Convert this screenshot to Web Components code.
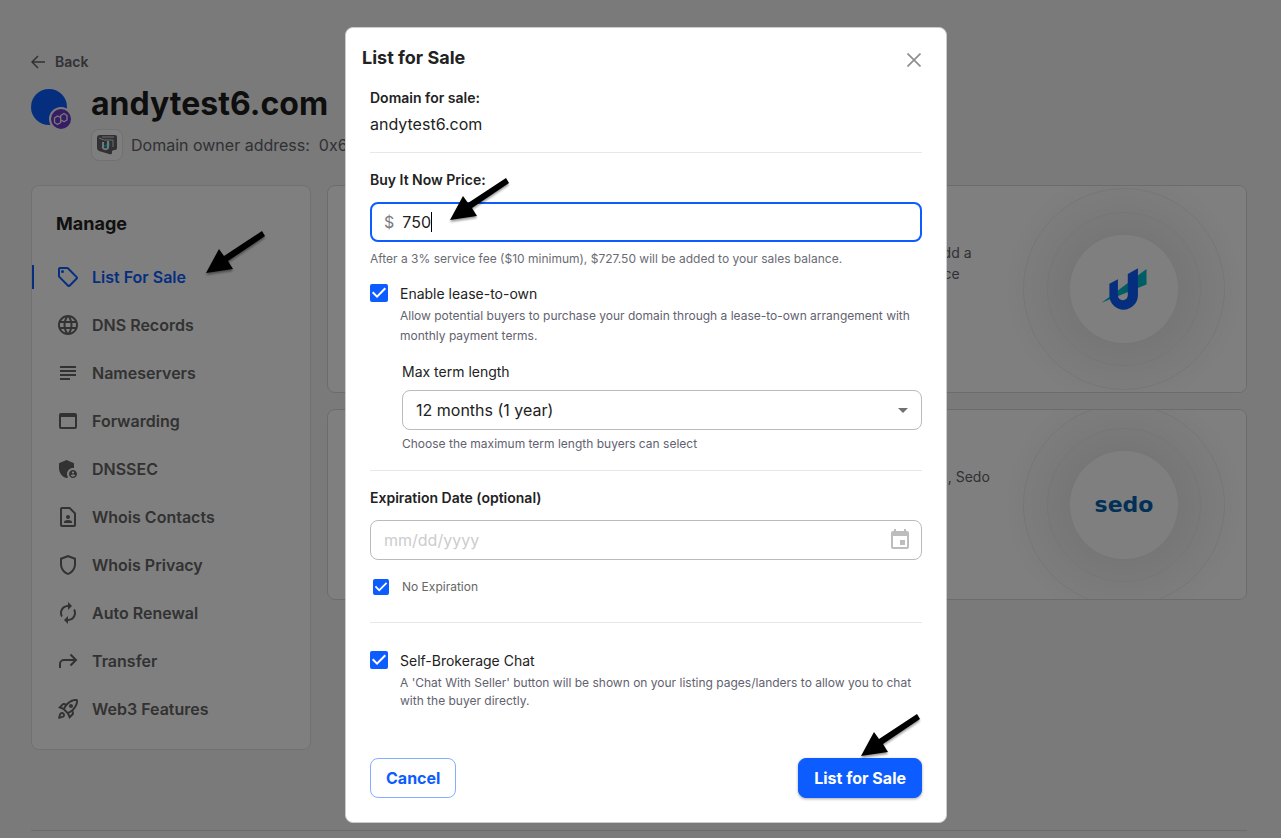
<!DOCTYPE html>
<html lang="en">
<head>
<meta charset="utf-8">
<title>List for Sale - andytest6.com</title>
<style>
    html{
        background:#f4f4f4;
    }
    body{
        margin:0;
        min-height:100vh;
        font-family:Inter, "Liberation Sans", sans-serif;
        font-size:14px;
        line-height:20px;
        color:#222;
    }
</style>
</head>
<body>
<domain-page>
    <domain-header slot="header" name="andytest6.com">0x6</domain-header>
    <side-nav slot="nav">
        <nav-item icon="tag" active>List For Sale</nav-item>
        <nav-item icon="globe">DNS Records</nav-item>
        <nav-item icon="lines">Nameservers</nav-item>
        <nav-item icon="window">Forwarding</nav-item>
        <nav-item icon="admin">DNSSEC</nav-item>
        <nav-item icon="contact">Whois Contacts</nav-item>
        <nav-item icon="shield">Whois Privacy</nav-item>
        <nav-item icon="renew">Auto Renewal</nav-item>
        <nav-item icon="transfer">Transfer</nav-item>
        <nav-item icon="rocket">Web3 Features</nav-item>
    </side-nav>
    <market-card class="tall">
        domain, add a<br>marketplace
        <svg slot="logo" width="46" height="42" viewBox="514 293 139 128">
            <path fill="#0bc" d="M515 399L652 296V343Z"/>
            <path fill="#0d5cff" d="M539 341V376C539 401 559 420 582 420S626 401 626 376V294L595 311V377C595 385 589 391 580 391S565 385 565 377V327Z"/>
        </svg>
    </market-card>
    <market-card>
        or Afternic, Sedo
        <sedo-logo slot="logo">sedo</sedo-logo>
    </market-card>
</domain-page>
<sale-dialog>
    <span slot="title">List for Sale</span>
    <span slot="domain">andytest6.com</span>
    <check-option slot="lease" class="loose">
        Enable lease-to-own
        <span slot="hint">Allow potential buyers to purchase your domain through a lease-to-own arrangement with monthly payment terms.</span>
    </check-option>
    <check-option slot="expire" small>No Expiration</check-option>
    <check-option slot="chat">
        Self-Brokerage Chat
        <span slot="hint">A 'Chat With Seller' button will be shown on your listing pages/landers to allow you to chat with the buyer directly.</span>
    </check-option>
</sale-dialog>

<script>
const icons = {
    tag:'<path d="M21.41 11.41l-8.83-8.83c-.37-.37-.88-.58-1.41-.58H4c-1.1 0-2 .9-2 2v7.17c0 .53.21 1.04.59 1.41l8.83 8.83c.78.78 2.05.78 2.83 0l7.17-7.17c.78-.78.78-2.04-.01-2.83zM12.83 20L4 11.17V4h7.17L20 12.83 12.83 20z"/><circle cx="6.5" cy="6.5" r="1.5"/>',
    globe:'<path d="M11.99 2C6.47 2 2 6.48 2 12s4.47 10 9.99 10C17.52 22 22 17.52 22 12S17.52 2 11.99 2zm6.93 6h-2.95c-.32-1.25-.78-2.45-1.38-3.56 1.84.63 3.37 1.91 4.33 3.56zM12 4.04c.83 1.2 1.48 2.53 1.91 3.96h-3.82c.43-1.43 1.08-2.76 1.91-3.96zM4.26 14C4.1 13.36 4 12.69 4 12s.1-1.36.26-2h3.38c-.08.66-.14 1.32-.14 2s.06 1.34.14 2H4.26zm.82 2h2.95c.32 1.25.78 2.45 1.38 3.56-1.84-.63-3.37-1.9-4.33-3.56zm2.95-8H5.08c.96-1.66 2.49-2.93 4.33-3.56C8.81 5.55 8.35 6.75 8.03 8zM12 19.96c-.83-1.2-1.48-2.53-1.91-3.96h3.82c-.43 1.43-1.08 2.76-1.91 3.96zM14.34 14H9.66c-.09-.66-.16-1.32-.16-2s.07-1.35.16-2h4.68c.09.65.16 1.32.16 2s-.07 1.34-.16 2zm.25 5.56c.6-1.11 1.06-2.31 1.38-3.56h2.95c-.96 1.65-2.49 2.93-4.33 3.56zM16.36 14c.08-.66.14-1.32.14-2s-.06-1.34-.14-2h3.38c.16.64.26 1.31.26 2s-.1 1.36-.26 2h-3.38z"/>',
    lines:'<path d="M4 5h16v2H4zM4 9h16v2H4zM4 13h16v2H4zM4 17h10v2H4z"/>',
    window:'<path d="M19 4H5c-1.11 0-2 .9-2 2v12c0 1.1.89 2 2 2h14c1.1 0 2-.9 2-2V6c0-1.1-.89-2-2-2zm0 14H5V8h14v10z"/>',
    admin:'<path d="M17 11c.34 0 .67.04 1 .09V6.27L10.5 3 3 6.27v4.91c0 4.54 3.2 8.79 7.5 9.82.55-.13 1.08-.32 1.6-.55-.69-.98-1.1-2.17-1.1-3.45 0-3.31 2.69-6 6-6z"/><path d="M17 13c-2.21 0-4 1.79-4 4s1.79 4 4 4 4-1.79 4-4-1.79-4-4-4zm0 1.38c.62 0 1.12.51 1.12 1.12s-.51 1.12-1.12 1.12-1.12-.51-1.12-1.12.5-1.12 1.12-1.12zm0 5.37c-.93 0-1.74-.46-2.24-1.17.05-.72 1.51-1.08 2.24-1.08s2.19.36 2.24 1.08c-.5.71-1.31 1.17-2.24 1.17z"/>',
    contact:'<path d="M14 2H6c-1.1 0-2 .9-2 2v16c0 1.1.9 2 2 2h12c1.1 0 2-.9 2-2V8l-6-6zm4 18H6V4h7.17L18 8.83V20z"/><circle cx="12" cy="12" r="2"/><path d="M8 18h8v-.57c0-.81-.48-1.53-1.22-1.85-.85-.37-1.79-.58-2.78-.58s-1.93.21-2.78.58C8.48 15.9 8 16.62 8 17.43z"/>',
    shield:'<path d="M12 2L4 5v6.09c0 5.05 3.41 9.76 8 10.91 4.59-1.15 8-5.86 8-10.91V5l-8-3zm6 9.09c0 4-2.55 7.7-6 8.83-3.45-1.13-6-4.82-6-8.83v-4.7l6-2.25 6 2.25v4.7z"/>',
    renew:'<path d="M12 6v3l4-4-4-4v3c-4.42 0-8 3.58-8 8 0 1.57.46 3.03 1.24 4.26L6.7 14.8c-.45-.83-.7-1.79-.7-2.8 0-3.31 2.69-6 6-6zm6.76 1.74L17.3 9.2c.44.84.7 1.79.7 2.8 0 3.31-2.69 6-6 6v-3l-4 4 4 4v-3c4.42 0 8-3.58 8-8 0-1.57-.46-3.03-1.24-4.26z"/>',
    transfer:'<path fill="none" stroke="currentColor" stroke-width="2" d="M4 19v-4a4 4 0 0 1 4-4h12M14.5 5.5L20 11l-5.500 5.500"/>',
    rocket:'<path d="M6 15c-.83 0-1.58.34-2.12.88C2.7 17.06 2 22 2 22s4.940-.7 6.120-1.880C8.660 19.580 9 18.830 9 18c0-1.660-1.340-3-3-3zm.71 3.710c-.28.28-2.170.76-2.170.76s.47-1.880.76-2.170c.17-.19.42-.3.7-.3.55 0 1 .45 1 1 0 .28-.11.53-.29.71zM17.420 13.650c6.360-6.360 4.240-11.310 4.240-11.310s-4.950-2.120-11.310 4.240l-2.490-.5c-.65-.13-1.330.08-1.810.55L2 10.690l5 2.140L11.170 17l2.140 5 4.050-4.050c.47-.47.68-1.150.55-1.810l-.49-2.490zM7.410 10.830L5.500 10.010l1.970-1.970 1.440.29c-.57.83-1.080 1.700-1.500 2.500zm6.580 7.670l-.82-1.910c.8-.42 1.670-.93 2.490-1.500l.29 1.440-1.960 1.970zM16 12.240c-1.320 1.320-3.380 2.400-4.040 2.730l-2.930-2.930c.32-.65 1.400-2.710 2.730-4.040 4.680-4.680 8.230-3.990 8.230-3.990s.69 3.550-3.990 8.230zM15 11c1.100 0 2-.9 2-2s-.9-2-2-2-2 .9-2 2 .9 2 2 2z"/>'
};

// attach an open shadow root filled with the given markup
function shadow(host, html){
    let template = document.createElement('template');
    template.innerHTML = html;
    host.attachShadow({mode:'open'}).appendChild(template.content.cloneNode(true));
}

customElements.define('domain-page', class extends HTMLElement{
    constructor(){
        super();
        shadow(this, `
<style>
    :host{
        display:block;
        padding:52px 34px 0 31px;
    }
    main{
        display:grid;
        grid-template-columns:280px 1fr;
        gap:16px;
        align-items:start;
        margin-top:25px;
    }
    .cards{
        display:grid;
        gap:16px;
    }
    footer{
        margin-top:80px;
        border-top:1px solid #d8d8d8;
    }
</style>
<slot name="header"></slot>
<main>
    <slot name="nav"></slot>
    <div class="cards"><slot></slot></div>
</main>
<footer></footer>`);
    }
});

customElements.define('domain-header', class extends HTMLElement{
    constructor(){
        super();
        shadow(this, `
<style>
    :host{
        display:block;
    }
    a{
        display:flex;
        width:fit-content;
        gap:10px;
        align-items:center;
        font-weight:600;
        color:#62626a;
        text-decoration:none;
    }
    .row{
        display:flex;
        gap:24px;
        margin-top:12px;
    }
    .avatar{
        position:relative;
        width:36px;
        height:36px;
        margin-top:5px;
        border-radius:50%;
        background:#0d5cff;
    }
    .avatar svg{
        position:absolute;
        left:18px;
        top:18px;
    }
    h1{
        margin:0 0 6px;
        font-size:32px;
        line-height:40px;
        color:#1c1c1c;
    }
    .owner{
        display:flex;
        gap:8px;
        align-items:center;
        font-size:16px;
        color:#62626a;
    }
    .wallet{
        display:flex;
        box-sizing:border-box;
        width:32px;
        height:32px;
        margin:-1px 0;
        align-items:center;
        justify-content:center;
        border:1px solid #e2e2e2;
        border-radius:8px;
        background:#fdfdfd;
    }
</style>
<a href="#"><svg width="14" height="14" viewBox="0 0 14 14" fill="none" stroke="currentColor" stroke-width="1.500"><path d="M14 7H1M7 1L1 7l6 6"/></svg>Back</a>
<div class="row">
    <div class="avatar">
        <svg width="24" height="24" viewBox="0 0 24 24" fill="none">
            <circle cx="12" cy="12" r="11" fill="#6c38c8" stroke="#f4f4f4" stroke-width="2"/>
            <path stroke="#f4f4f4" stroke-width="1.300" stroke-linejoin="round" d="M11.500 11V10.500L8.500 9 5.500 11V15.500L8.500 17.500 11.700 15.500V8.500L15 6.500 18 8.500V13L15 14.800 12.500 13.300"/>
        </svg>
    </div>
    <div>
        <h1></h1>
        <div class="owner">
            <span class="wallet">
                <svg width="22" height="22" viewBox="0 0 22 22" fill="none">
                    <path fill="#62626a" d="M1 4Q1 1 4 1H19Q21 1 21 3V14Q21 16 18 16L16 17V19Q16 21 13 20L3 17Q1 16 1 14Z"/>
                    <path stroke="#ddd" d="M3 4L8 6H17V13M6 3H18"/>
                    <path fill="#0bc" d="M3 14L14 8V12Z"/>
                    <path stroke="#eee" stroke-width="2" d="M7 8V14A3 3 0 0 0 12 14V7"/>
                </svg>
            </span>
            <span>Domain owner address:&nbsp; <slot></slot></span>
        </div>
    </div>
</div>`);
        this.shadowRoot.querySelector('h1').textContent = this.getAttribute('name');
    }
});

customElements.define('side-nav', class extends HTMLElement{
    constructor(){
        super();
        shadow(this, `
<style>
    :host{
        display:block;
        padding:26px 0 16px;
        border:1px solid #e2e2e2;
        border-radius:8px;
        background:#fff;
    }
    h2{
        margin:0 0 17px 24px;
        font-size:18px;
        line-height:24px;
    }
</style>
<h2>Manage</h2>
<nav><slot></slot></nav>`);
    }
});

customElements.define('nav-item', class extends HTMLElement{
    constructor(){
        super();
        shadow(this, `
<style>
    :host{
        display:block;
        position:relative;
        padding:12px 0;
    }
    a{
        display:flex;
        gap:12px;
        padding-left:24px;
        font-size:16px;
        line-height:24px;
        font-weight:600;
        color:#646464;
        text-decoration:none;
    }
    :host([active]) a{
        padding-left:22px;
        border-left:2px solid #0d5cff;
        color:#0d5cff;
    }
    note-arrow{
        right:44px;
        top:-22px;
    }
</style>
<a href="#"><svg width="24" height="24" viewBox="0 0 24 24" fill="currentColor">${icons[this.getAttribute('icon')]}</svg><slot></slot></a>
${this.hasAttribute('active') ? '<note-arrow></note-arrow>' : ''}`);
    }
});

customElements.define('market-card', class extends HTMLElement{
    constructor(){
        super();
        shadow(this, `
<style>
    :host{
        display:grid;
        grid-template-columns:1fr 124px 244px;
        box-sizing:border-box;
        height:191px;
        border:1px solid #d8d8d8;
        border-radius:8px;
        background:#fff;
        overflow:hidden;
    }
    :host(.tall){
        height:208px;
    }
    p{
        grid-column:2;
        margin:56px 0 0;
        line-height:21px;
        color:#62626a;
        white-space:nowrap;
    }
    .art, .ring, .disc{
        display:flex;
        flex:none;
        align-items:center;
        justify-content:center;
        box-sizing:border-box;
    }
    .art{
        min-height:0;
        background:radial-gradient(circle, #ededed 54px, #f6f6f6 86px, #fff 122px);
    }
    .ring{
        width:154px;
        height:154px;
        border:1px solid #ebebeb;
        border-radius:50%;
    }
    .outer{
        width:202px;
        height:202px;
    }
    .disc{
        width:108px;
        height:108px;
        border-radius:50%;
        background:#fff;
    }
</style>
<p><slot></slot></p>
<div class="art">
    <div class="ring outer"><div class="ring"><div class="disc"><slot name="logo"></slot></div></div></div>
</div>`);
    }
});

customElements.define('sedo-logo', class extends HTMLElement{
    constructor(){
        super();
        shadow(this, `
<style>
    :host{
        font:bold 22px/28px "DejaVu Sans", sans-serif;
        color:#0461ac;
    }
</style>
<slot></slot>`);
    }
});

customElements.define('note-arrow', class extends HTMLElement{
    constructor(){
        super();
        shadow(this, `
<style>
    :host{
        display:block;
        position:absolute;
        width:60px;
        height:44px;
        pointer-events:none;
    }
    svg{
        display:block;
        overflow:visible;
        filter:drop-shadow(0 2px 1px rgba(0,0,0,.4));
    }
</style>
<svg width="60" height="44" viewBox="0 0 60 44">
    <path d="M0 42L13 18 18 25 56 0 59 5 22 30 27 38Z"/>
</svg>`);
    }
});

customElements.define('check-option', class extends HTMLElement{
    constructor(){
        super();
        shadow(this, `
<style>
    :host{
        display:block;
        --hint-line:18px;
        --hint-gap:3px;
    }
    :host(.loose){
        --hint-line:20px;
        --hint-gap:2px;
    }
    .row{
        display:grid;
        grid-template-columns:18px 1fr;
        column-gap:12px;
    }
    input{
        appearance:none;
        width:18px;
        height:18px;
        margin:0;
        border-radius:2px;
        background:#0d5cff;
    }
    input::before{
        content:"";
        display:block;
        height:100%;
        background:#fff;
        clip-path:polygon(39% 78%, 11% 50%, 19% 42%, 39% 62%, 81% 20%, 89% 28%);
    }
    .hint{
        grid-column:2;
        margin-top:var(--hint-gap);
        font-size:12px;
        line-height:var(--hint-line);
        color:#62626f;
    }
    :host([small]) .row{
        grid-template-columns:16px 1fr;
        column-gap:13px;
        padding-left:3px;
        align-items:center;
        font-size:12px;
        color:#666;
    }
    :host([small]) input{
        width:16px;
        height:16px;
    }
    :host([small]) .hint{
        display:none;
    }
</style>
<div class="row">
    <input type="checkbox" id="box" checked>
    <label for="box"><slot></slot></label>
    <div class="hint"><slot name="hint"></slot></div>
</div>`);
    }
});

customElements.define('sale-dialog', class extends HTMLElement{
    constructor(){
        super();
        shadow(this, `
<style>
    :host{
        display:flex;
        position:fixed;
        inset:0;
        padding:27px 16px 0 27px;
        align-items:flex-start;
        justify-content:center;
        background:rgba(0,0,0,.5);
        overflow:auto;
    }
    .panel{
        box-sizing:border-box;
        width:602px;
        max-width:100%;
        border:1px solid #ccc;
        border-radius:8px;
        background:#fff;
    }
    header{
        display:flex;
        justify-content:space-between;
        align-items:flex-start;
        padding:16px 16px 0;
    }
    h2{
        margin:0;
        font-size:18px;
        line-height:28px;
    }
    button{
        font:inherit;
        cursor:pointer;
    }
    .close{
        display:flex;
        width:32px;
        height:32px;
        padding:0;
        align-items:center;
        justify-content:center;
        border:0;
        background:none;
        color:#8e8e8e;
    }
    form{
        padding:0 24px 24px;
    }
    section{
        padding:17px 0 16px;
        border-top:1px solid #e8e8e8;
    }
    section:first-child{
        padding-top:12px;
        border:0;
    }
    .title{
        display:block;
        font-weight:600;
    }
    .domain{
        margin-top:4px;
        font-size:16px;
        line-height:24px;
    }
    .field{
        display:flex;
        position:relative;
        box-sizing:border-box;
        height:40px;
        padding:0 13px;
        align-items:center;
        border:1px solid #bbb;
        border-radius:8px;
        font-size:16px;
        line-height:24px;
    }
    .title + .field{
        margin-top:12px;
    }
    .focused{
        padding:0 12px;
        border:2px solid #0d5cff;
        cursor:text;
    }
    .sign{
        margin-right:8px;
        color:#7a7a80;
    }
    input, select{
        min-width:0;
        padding:0;
        border:0;
        outline:0;
        background:none;
        font:inherit;
        color:#222;
    }
    #price{
        field-sizing:content;
    }
    .caret{
        width:1px;
        height:20px;
        background:#000;
    }
    #date{
        flex:1;
    }
    #date::placeholder{
        color:#ccc;
    }
    .icon{
        flex:none;
        display:flex;
        width:24px;
        height:24px;
        margin-right:-4px;
        padding:0;
        border:0;
        background:none;
        color:#bdbdbd;
    }
    .drop{
        display:grid;
        padding:0;
    }
    .drop select{
        grid-area:1 / 1;
        appearance:none;
        height:38px;
        padding:0 40px 0 13px;
    }
    .drop svg{
        grid-area:1 / 1;
        justify-self:end;
        margin-right:13px;
        pointer-events:none;
    }
    .help{
        font-size:12px;
        color:#62626f;
    }
    .fee{
        margin:7px 0 15px;
        color:#6b6b74;
    }
    .term{
        margin:16px 0 0 32px;
    }
    .term .field{
        margin:8px 0 4px;
    }
    .expire{
        padding-bottom:25px;
    }
    .expire slot{
        display:block;
        margin-top:17px;
    }
    .chat{
        padding:28px 0 48px;
    }
    .actions{
        display:flex;
        justify-content:space-between;
    }
    .actions button{
        position:relative;
        height:40px;
        padding:0 15px;
        border:1px solid #86aeff;
        border-radius:8px;
        background:#fff;
        font-size:16px;
        font-weight:700;
        color:#0d5cff;
    }
    .actions .go{
        border-color:#0d5cff;
        background:#0d5cff;
        color:#fff;
        box-shadow:0 1px 3px rgba(0,0,0,.35);
    }
    .focused note-arrow{
        left:78px;
        top:-26px;
    }
    .go note-arrow{
        left:62px;
        top:-45px;
    }
</style>
<div class="panel" role="dialog" aria-labelledby="heading">
    <header>
        <h2 id="heading"><slot name="title"></slot></h2>
        <button class="close" aria-label="Close"><svg width="14" height="14" viewBox="0 0 14 14" stroke="currentColor" stroke-width="1.700"><path d="M.5.5l13 13M13.500.5l-13 13"/></svg></button>
    </header>
    <form>
        <section>
            <span class="title">Domain for sale:</span>
            <div class="domain"><slot name="domain"></slot></div>
        </section>
        <section>
            <label class="title" for="price">Buy It Now Price:</label>
            <div class="field focused">
                <span class="sign">$</span>
                <input id="price" type="text" inputmode="decimal" value="750">
                <span class="caret"></span>
                <note-arrow></note-arrow>
            </div>
            <div class="help fee">After a 3% service fee ($10 minimum), $727.50 will be added to your sales balance.</div>
            <slot name="lease"></slot>
            <div class="term">
                <label for="months">Max term length</label>
                <div class="field drop">
                    <select id="months"><option>12 months (1 year)</option></select>
                    <svg width="10" height="5" viewBox="0 0 10 5" fill="#707070"><path d="M0 0h10L5 5z"/></svg>
                </div>
                <div class="help">Choose the maximum term length buyers can select</div>
            </div>
        </section>
        <section class="expire">
            <label class="title" for="date">Expiration Date (optional)</label>
            <div class="field">
                <input id="date" type="text" placeholder="mm/dd/yyyy">
                <button class="icon" type="button" aria-label="Choose date"><svg width="24" height="24" viewBox="0 0 24 24" fill="currentColor"><path d="M17 12h-5v5h5v-5zM16 1v2H8V1H6v2H5c-1.110 0-1.990.9-1.990 2L3 19c0 1.100.89 2 2 2h14c1.100 0 2-.9 2-2V5c0-1.100-.9-2-2-2h-1V1h-2zm3 18H5V8h14v11z"/></svg></button>
            </div>
            <slot name="expire"></slot>
        </section>
        <section class="chat"><slot name="chat"></slot></section>
        <div class="actions">
            <button type="button">Cancel</button>
            <button type="button" class="go">List for Sale<note-arrow></note-arrow></button>
        </div>
    </form>
</div>`);
    }
});
</script>
</body>
</html>
